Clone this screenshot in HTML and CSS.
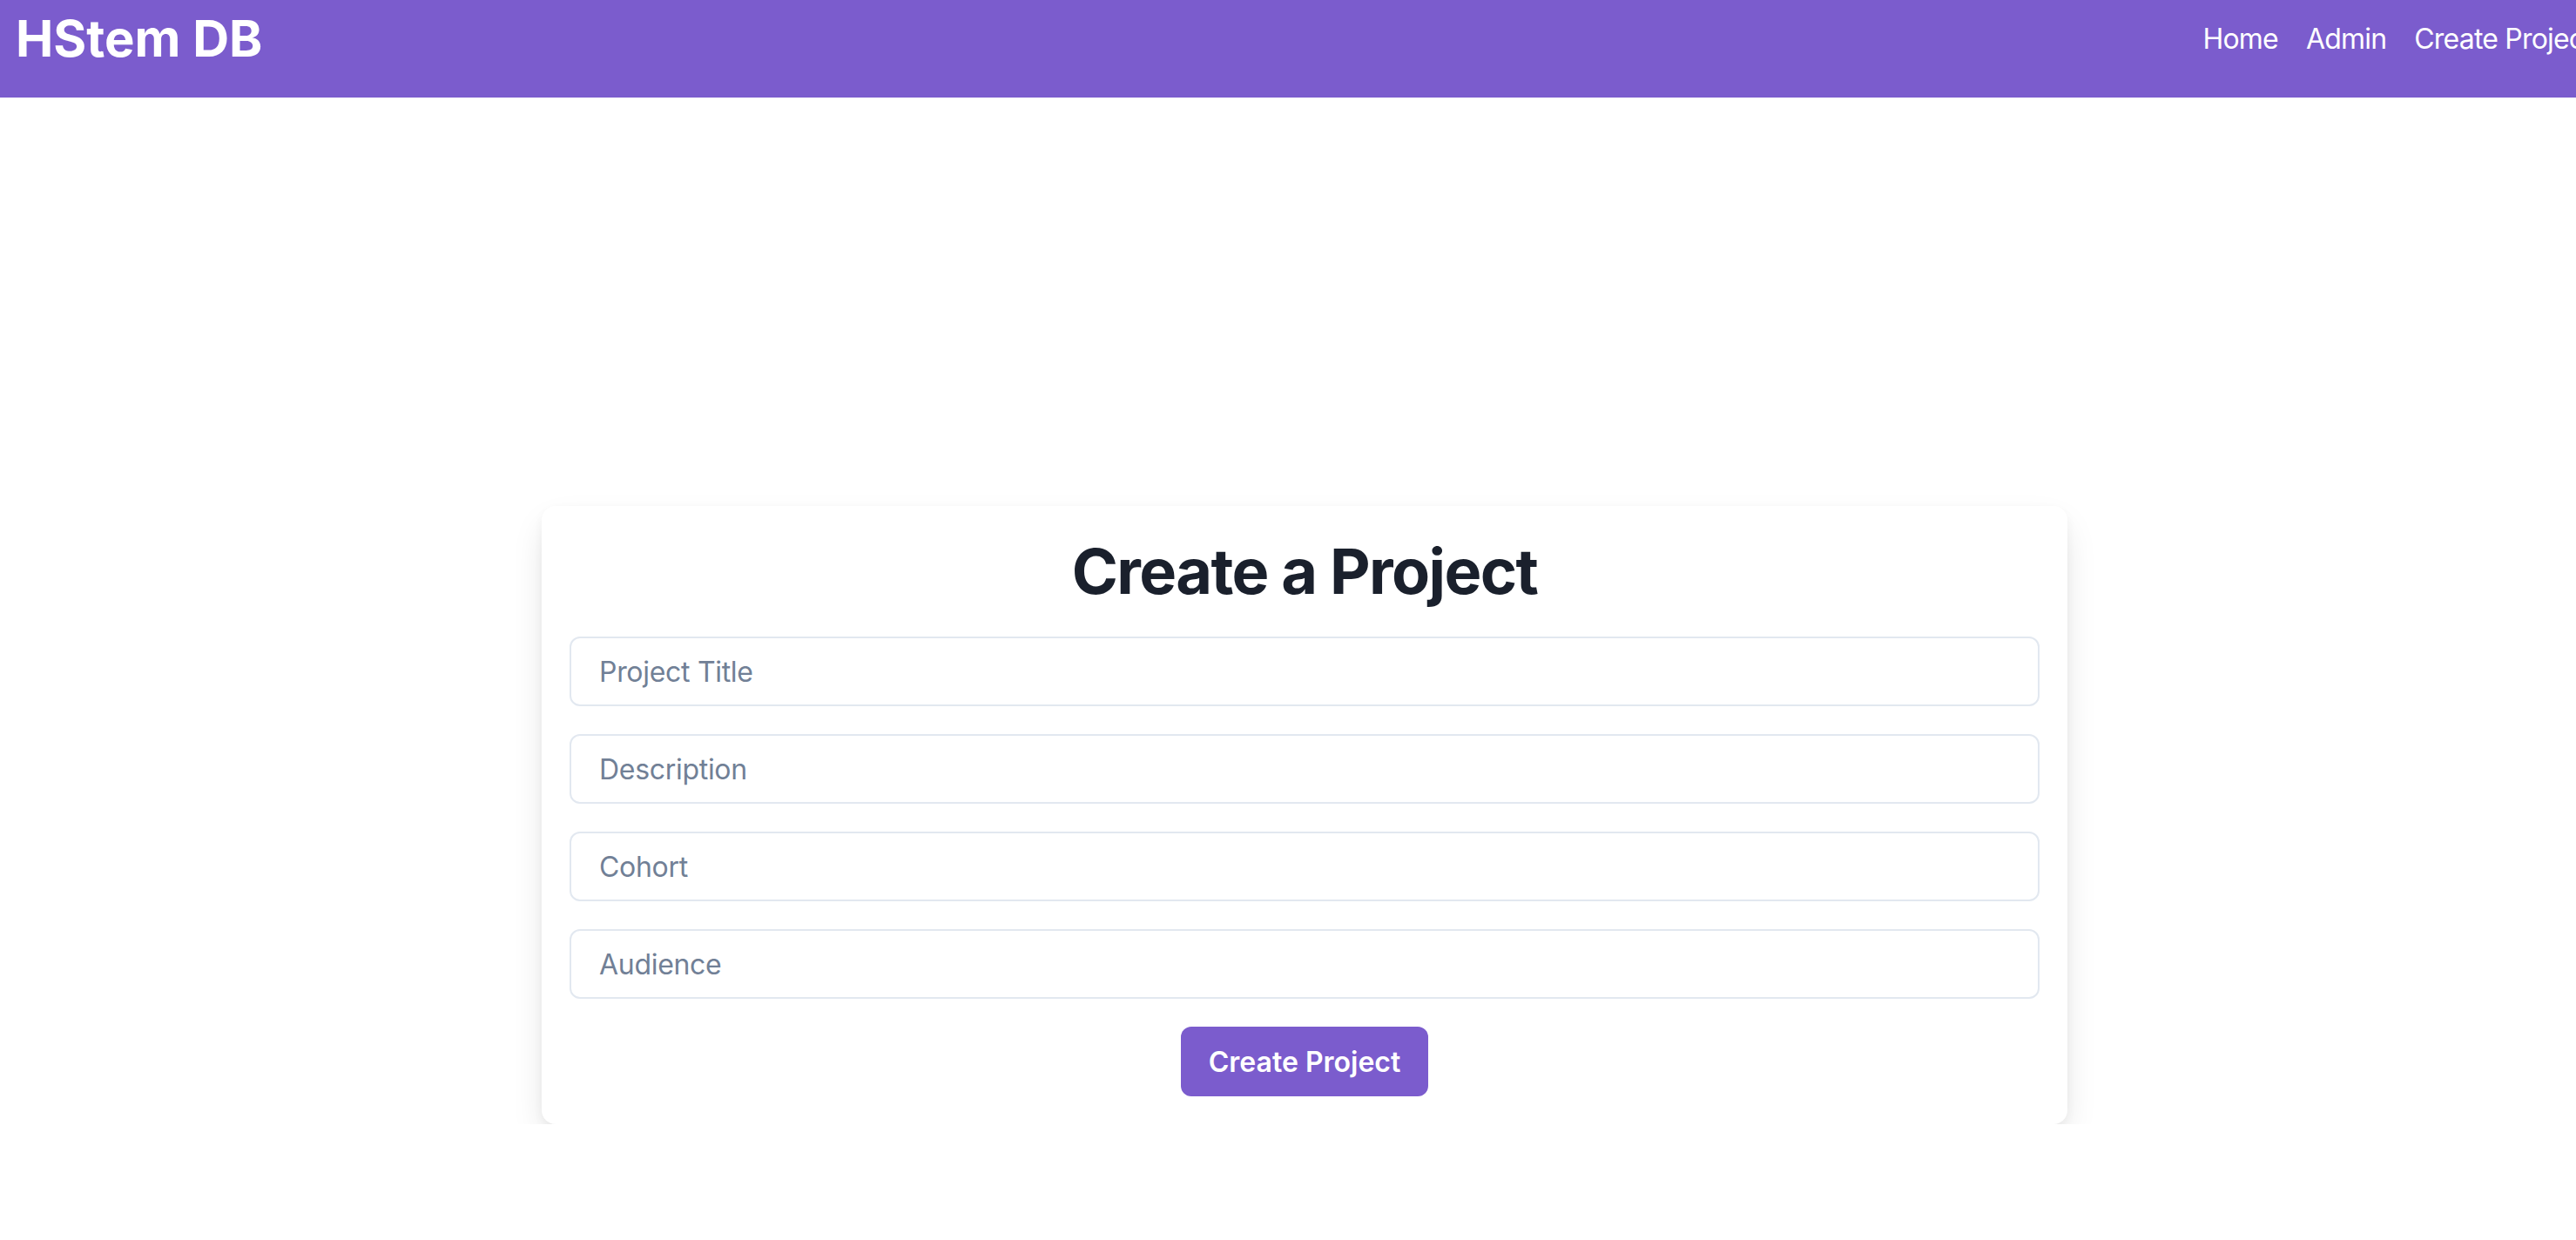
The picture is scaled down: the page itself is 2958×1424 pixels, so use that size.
FILE: index.html
```html
<!DOCTYPE html>
<html lang="en">
<head>
<meta charset="utf-8">
<title>HStem DB</title>
<link rel="stylesheet" href="styles.css">
</head>
<body>
<div class="page">
  <header class="topbar">
    <div class="logo">HStem DB</div>
    <nav class="nav">
      <a class="nav-link" href="#">Home</a>
      <a class="nav-link" href="#">Admin</a>
      <a class="nav-link" href="#">Create Project</a>
    </nav>
  </header>
  <main class="main">
    <form class="card">
      <h1 class="card-title">Create a Project</h1>
      <input class="field" type="text" placeholder="Project Title">
      <input class="field" type="text" placeholder="Description">
      <input class="field" type="text" placeholder="Cohort">
      <input class="field" type="text" placeholder="Audience">
      <button class="submit" type="button">Create Project</button>
    </form>
  </main>
</div>
</body>
</html>
```

FILE: styles.css
```css
html, body {
  margin: 0;
  padding: 0;
  overflow: hidden;
  background: #ffffff;
}

body {
  font-family: Inter, "Noto Sans", "Liberation Sans", sans-serif;
  color: #1a202c;
}

.page {
  width: 2996px;
}

.topbar {
  box-sizing: border-box;
  height: 112px;
  background: #7b5ccd;
  display: flex;
  align-items: center;
  justify-content: space-between;
  padding: 10px 19px 32px 18px;
}

.logo {
  font-size: 58px;
  font-weight: 700;
  line-height: 1.2;
  color: #ffffff;
}

.nav {
  display: flex;
  gap: 32px;
}

.nav-link {
  font-size: 32px;
  line-height: 1.5;
  letter-spacing: -0.8px;
  color: #ffffff;
  text-decoration: none;
}

.main {
  display: flex;
  justify-content: center;
  padding-top: 469px;
}

.card {
  box-sizing: border-box;
  width: 1752px;
  margin: 0;
  padding: 32px;
  background: #ffffff;
  border-radius: 16px;
  box-shadow: 0 18px 40px -8px rgba(0, 0, 0, 0.15), 0 4px 12px rgba(0, 0, 0, 0.04);
  display: flex;
  flex-direction: column;
  align-items: stretch;
  gap: 32px;
}

.card-title {
  margin: 0;
  text-align: center;
  font-size: 72px;
  font-weight: 700;
  line-height: 1.2;
  letter-spacing: -1.6px;
  color: #1a202c;
}

.field {
  box-sizing: border-box;
  height: 80px;
  width: 100%;
  padding: 0 32px;
  border: 2px solid #e2e8f0;
  border-radius: 12px;
  font-family: Inter, "Noto Sans", "Liberation Sans", sans-serif;
  font-size: 32px;
  letter-spacing: -0.3px;
  color: #1a202c;
  background: #ffffff;
  outline: none;
}

.field::placeholder {
  color: #718096;
  opacity: 1;
}

.submit {
  align-self: center;
  height: 80px;
  padding: 0 32px;
  border: none;
  border-radius: 12px;
  background: #7b5ccd;
  color: #ffffff;
  font-family: Inter, "Noto Sans", "Liberation Sans", sans-serif;
  font-size: 32px;
  font-weight: 600;
  cursor: pointer;
}
```
